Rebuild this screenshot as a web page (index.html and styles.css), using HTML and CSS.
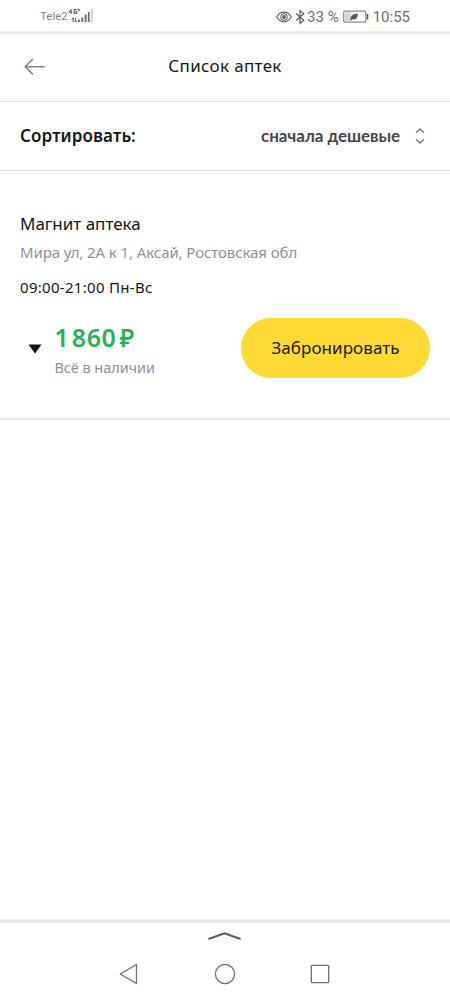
FILE: index.html
```html
<!DOCTYPE html>
<html lang="ru">
<head>
<meta charset="utf-8">
<title>Список аптек</title>
<link rel="stylesheet" href="styles.css">
</head>
<body>
<div class="screen">
  <div class="status">
    <div class="carrier">
      <span class="carrier-name">Tele2</span>
      <svg class="signal" width="27" height="18" viewBox="0 0 27 18" fill="none">
        <path d="M3.3 2 1.2 5.2h3M3.4 3.4v3.4M8.6 2.6H6.2v3.6h2.5V4.6H7.5M10.8 1.7v2.6M9.6 3h2.5" stroke="#606060" stroke-width="1.1"/>
        <path d="M5 11v4M3.6 12.4 5 10.8l1 1.3M7.6 10.8v4M6.4 13.6l1.2 1.4 1.4-1.5" stroke="#606060"/>
        <path d="M11 12.5V15M14.3 10.5V15M17.6 7.5V15M20.8 5V15" stroke="#707070" stroke-width="1.9"/>
        <path d="M24 2V15" stroke="#c6c6c6" stroke-width="1.6"/>
      </svg>
    </div>
    <div class="indicators">
      <svg width="16" height="14" viewBox="0 0 16 14" fill="none" stroke="#626262">
        <path d="M.8 7C4.2.6 11.8.6 15.2 7 11.8 13.4 4.2 13.4.8 7Z" stroke-width="1.2"/>
        <circle cx="8" cy="7" r="3.2" stroke-width="1.1"/><circle cx="8" cy="7" r="1.9" fill="#626262" stroke="none"/>
      </svg>
      <svg class="bluetooth" width="10" height="16" viewBox="0 0 10 16" fill="none" stroke="#626262" stroke-width="1.2">
        <path d="M1 4.5 8.7 11.2 5 14.4V1.6l3.7 3.2L1 11.5"/>
      </svg>
      <span class="percent">33 %</span>
      <svg class="battery" width="26" height="14" viewBox="0 0 26 14">
        <rect x=".7" y="1.2" width="22" height="11" rx="1" fill="#fff" stroke="#8b8b8b" stroke-width="1.2"/>
        <path d="M1.8 2.3h6.5v8.8H1.8z" fill="#d8d8d8"/>
        <path d="M7.5 10c0-4 2-5.7 7.2-6.4.3 4.2-2 6.8-5.6 5.7l-1 1.2z" fill="#555"/>
        <path d="M24.5 4v5.5" stroke="#555" stroke-width="1.6"/>
      </svg>
      <span class="clock">10:55</span>
    </div>
  </div>

  <header class="header">
    <svg class="back" width="22" height="18" viewBox="0 0 22 18" fill="none" stroke="#85838f" stroke-width="1.6" stroke-linecap="round" stroke-linejoin="round">
      <path d="M20 8.7H1.2M8.4 1.5 1.2 8.7l7.2 7.2"/>
    </svg>
    <h1 class="title">Список аптек</h1>
  </header>

  <div class="sort">
    <span class="sort-label">Сортировать:</span>
    <div class="sort-choice">
      <span class="sort-value">сначала дешевые</span>
      <svg class="sort-arrows" width="10" height="16" viewBox="0 0 10 16" fill="none" stroke="#777683" stroke-width="1.3">
        <path d="M1 4.8 5 1l4 3.8M1 11.2 5 15l4-3.8"/>
      </svg>
    </div>
  </div>

  <main class="list">
    <article class="pharmacy">
      <h2 class="name">Магнит аптека</h2>
      <p class="address">Мира ул, 2А к 1, Аксай, Ростовская обл</p>
      <p class="hours">09:00-21:00 Пн-Вс</p>
      <div class="offer">
        <svg class="expand" width="14" height="10" viewBox="0 0 14 10"><path d="M.5.5h13L7 9.5z" fill="#111"/></svg>
        <div class="stock">
          <div class="price"><span>1</span><span class="rest">860</span><span>₽</span></div>
          <div class="available">Всё в наличии</div>
        </div>
        <button class="book">Забронировать</button>
      </div>
    </article>
  </main>

  <nav class="nav">
    <svg class="pull" width="34" height="10" viewBox="0 0 34 10" fill="none" stroke="#5d5d5d" stroke-width="2" stroke-linecap="round"><path d="M1.2 7.8 16.5 2.2l15.3 5.6"/></svg>
    <div class="keys">
      <svg width="22" height="22" viewBox="0 0 22 22" fill="none" stroke="#707070" stroke-width="1.3" stroke-linejoin="round"><path d="M18.5 1.5v19L2.3 11z"/></svg>
      <svg width="22" height="22" viewBox="0 0 22 22" fill="none" stroke="#707070" stroke-width="1.3"><circle cx="11" cy="11" r="9.6"/></svg>
      <svg width="22" height="22" viewBox="0 0 22 22" fill="none" stroke="#707070" stroke-width="1.3"><rect x="2.3" y="2.3" width="17.4" height="17.4" rx=".8"/></svg>
    </div>
  </nav>
</div>
</body>
</html>
```
FILE: styles.css
```css
* { box-sizing: border-box; }
body { margin: 0; background: #fff; font-family: "Noto Sans", sans-serif; color: #161616; }
h1, h2, p { margin: 0; font-weight: 400; }
svg { display: block; flex: none; }
.screen { width: 450px; height: 1000px; display: flex; flex-direction: column; overflow: hidden; white-space: nowrap; }

.status { height: 36px; flex: none; display: flex; justify-content: space-between; padding: 0 40px; color: #6e6e6e; font-family: Roboto, sans-serif; background: linear-gradient(#fff 31px, #e3e3e3 32px, #e9e9e9 33px, #fff 36px); }
.carrier { display: flex; }
.carrier-name { font-size: 11.5px; line-height: 33px; color: #858585; }
.signal { margin-top: 7px; }
.indicators { display: flex; align-items: center; height: 33px; font-size: 15px; }
.bluetooth { margin-left: 3px; }
.percent { margin-left: 2px; }
.battery { margin-left: 4px; }
.clock { margin-left: 4px; }

.header { height: 66px; flex: none; position: relative; display: flex; align-items: center; justify-content: center; border-bottom: 1px solid #dfdfe6; padding-bottom: 6px; }
.back { position: absolute; left: 24px; top: 22px; }
.title { font-size: 17px; line-height: 24px; letter-spacing: .34px; }

.sort { height: 69px; flex: none; display: flex; align-items: center; justify-content: space-between; padding: 0 25px 2px 20px; border-bottom: 1px solid #dfdfe2; }
.sort-label { font-size: 17px; font-weight: 600; letter-spacing: .12px; }
.sort-choice { display: flex; align-items: center; gap: 15px; }
.sort-value { font-family: Lato, sans-serif; font-weight: 700; font-size: 17px; letter-spacing: -.08px; color: #484848; }
.sort-arrows { margin-top: 2px; }

.list { flex: 1; }
.pharmacy { height: 249px; padding: 41px 20px 0; border-bottom: 2px solid #e8e8ed; }
.name { font-size: 17px; line-height: 24px; }
.address { font-size: 15px; line-height: 20px; margin-top: 6px; letter-spacing: -.09px; color: #918f99; }
.hours { font-size: 15px; line-height: 20px; margin-top: 15px; letter-spacing: .3px; }
.offer { display: flex; margin-top: 21px; height: 60px; }
.expand { margin: 26px 13px 0 7.5px; }
.stock { flex: 1; }
.price { display: flex; gap: 3px; font-size: 25px; font-weight: 600; line-height: 30px; color: #27b351; margin-top: 4px; }
.rest { letter-spacing: .6px; }
.available { font-size: 14.5px; line-height: 20px; margin-top: 5px; letter-spacing: -.05px; color: #918f99; }
.book { width: 189px; height: 60px; border: 0; border-radius: 30px; padding: 0; background: #ffd934; color: #211a0b; font: 17px/24px "Noto Sans", sans-serif; letter-spacing: .06px; }

.nav { height: 81px; flex: none; background: linear-gradient(#f2f2f2, #e0e0e0 3px, #fff 4px); padding-top: 12px; }
.pull { margin: 0 auto; }
.keys { display: flex; justify-content: space-between; padding: 22px 119px 0 118px; }
```
